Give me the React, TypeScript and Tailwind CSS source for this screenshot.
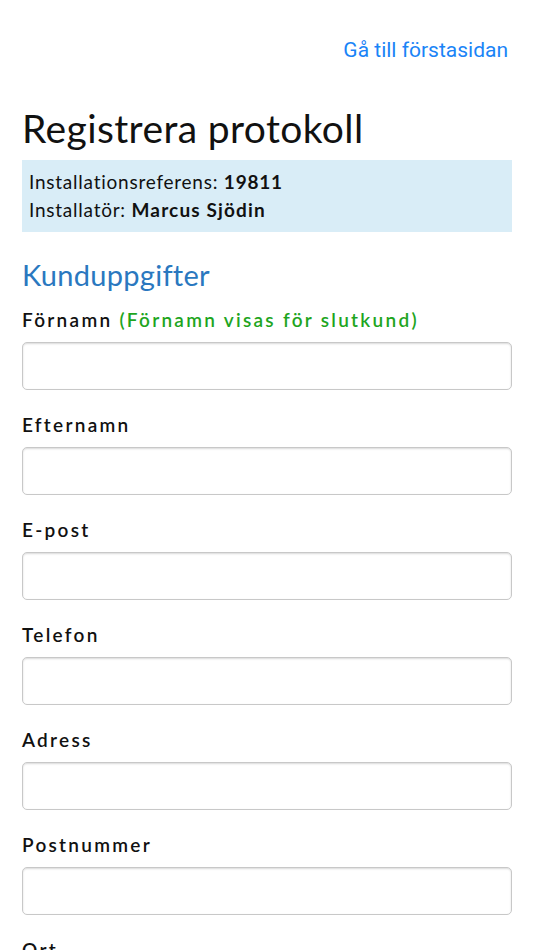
import React from "react";

const fields = ["Efternamn", "E-post", "Telefon", "Adress", "Postnummer", "Ort"];

const Field = ({ label, note }: { label: string; note?: string }) => (
  <div className="flex flex-col">
    <label className="text-[19px] font-semibold tracking-[0.12em] text-[#111] leading-[24px]">
      {label}
      {note && <span className="text-[#1ea51e]"> {note}</span>}
    </label>
    <input
      type="text"
      className="mt-[10px] h-[48px] w-full rounded-[5px] border border-[#c8c8c8] bg-white shadow-[inset_0_1px_2px_rgba(0,0,0,0.15)]"
    />
  </div>
);

export default function App() {
  return (
    <div className="min-h-screen bg-white px-[22px] pb-10 text-[#111]" style={{ fontFamily: "Lato, 'Open Sans', sans-serif" }}>
      <div className="flex justify-end pt-[36px] pr-[4px]">
        <a href="#" className="text-[21px] leading-[28px] text-[#1a84f7]" style={{ fontFamily: "Roboto, 'Liberation Sans', sans-serif" }}>
          Gå till förstasidan
        </a>
      </div>

      <h1 className="mt-[42px] text-[39px] leading-[44px] font-normal tracking-[0.01em]">Registrera protokoll</h1>

      <div className="mt-[10px] bg-[#d9edf7] px-[7px] py-[8px] text-[19px] leading-[28px] tracking-[0.04em]">
        <div>
          Installationsreferens: <span className="font-bold">19811</span>
        </div>
        <div>
          Installatör: <span className="font-bold tracking-[0.06em]">Marcus Sjödin</span>
        </div>
      </div>

      <h2 className="mt-[26px] text-[29px] leading-[34px] text-[#2a78bf] tracking-[0.01em]">Kunduppgifter</h2>

      <div className="mt-[16px] flex flex-col gap-[23px]">
        <Field label="Förnamn" note="(Förnamn visas för slutkund)" />
        {fields.map((f) => (
          <Field key={f} label={f} />
        ))}
      </div>
    </div>
  );
}
